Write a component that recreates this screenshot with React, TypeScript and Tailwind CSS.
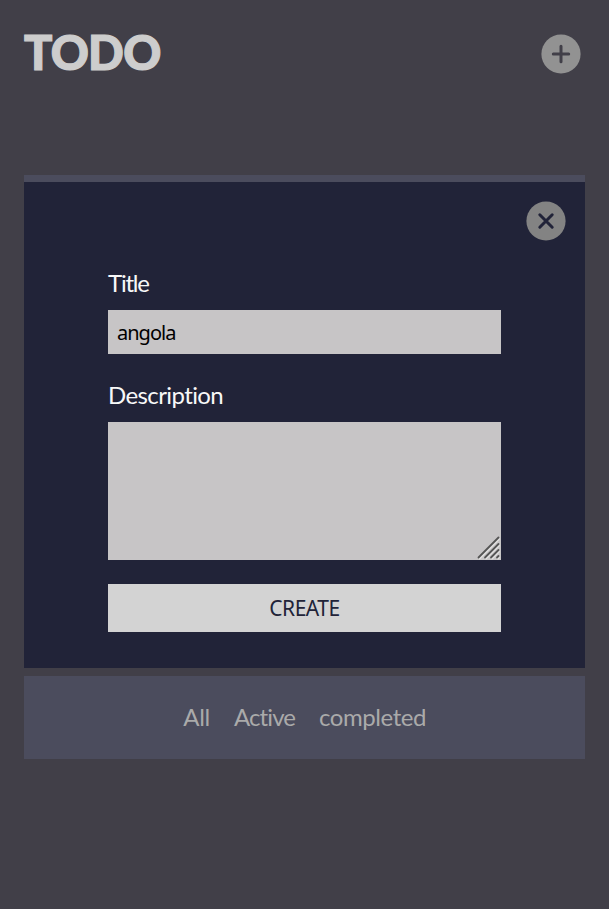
import { useState } from "react";

const filters = [
  { label: "All", width: "w-[27px]", text: "tracking-[-0.4px]" },
  { label: "Active", width: "w-[61px]", text: "tracking-[-0.9px]" },
  { label: "completed", width: "w-[107px]", text: "tracking-[-0.45px]" },
];

function Cross() {
  return (
    <svg viewBox="0 0 40 40" className="size-10" fill="none" strokeLinecap="round" strokeWidth="3">
      <circle cx="20" cy="20" r="19.6" fill="#838383" />
      <path d="M13.8 13.8 26.2 26.2M26.2 13.8 13.8 26.2" stroke="#212338" />
    </svg>
  );
}

function Plus() {
  return (
    <svg viewBox="0 0 40 40" className="size-10" fill="none" strokeLinecap="round" strokeWidth="3">
      <circle cx="20" cy="20" r="19.6" fill="#929292" />
      <path d="M20 12.3V27.7M12.3 20H27.7" stroke="#413f48" />
    </svg>
  );
}

function Grip() {
  return (
    <svg viewBox="0 0 24 24" className="pointer-events-none absolute bottom-0 right-0 size-6" fill="none" strokeWidth="1.8" strokeLinecap="round">
      <path d="M2.5 22.5 22 3M9 22.5 22 9.5M15 22.5 22 15.5M21 22.5 22 21.5" stroke="#e2e1e1" />
      <path d="M1.5 21.5 21.5 1.5M8 21.5 21.5 8M14 21.5 21.5 14M20 21.5 21.5 20" stroke="#555" />
    </svg>
  );
}

export default function App() {
  const [title, setTitle] = useState("angola");
  return (
    <main className="h-[909px] w-[609px] bg-[#413f48] px-6 font-['Lato',sans-serif]">
      <header className="flex h-[175px] items-start justify-between pr-1 pt-[34px]">
        <h1 className="mt-[-6px] whitespace-nowrap text-[47px] font-black leading-[48px] tracking-[-0.7px] text-[#cdcdcd] [-webkit-text-stroke:1.2px_#cdcdcd]">TODO</h1>
        <button aria-label="Add"><Plus /></button>
      </header>
      <section className="h-[493px] border-t-[7px] border-[#4b4c5d] bg-[#212338]">
        <div className="flex h-[83px] justify-end pr-[19px] pt-[19px]">
          <button aria-label="Close" className="h-10"><Cross /></button>
        </div>
        <form className="flex flex-col px-[84px]" onSubmit={(e) => e.preventDefault()}>
          <label htmlFor="title" className="h-[45px] pt-[3px] text-[24px] leading-[30px] tracking-[-1.2px] text-[#f8f8f8]">Title</label>
          <input id="title" value={title} onChange={(e) => setTitle(e.target.value)} className="h-11 bg-[#c7c5c6] px-[9px] font-['Noto_Sans',sans-serif] text-[20px] tracking-[-1px] text-black outline-none" />
          <label htmlFor="description" className="mt-6 h-11 pt-[2px] text-[24px] leading-[30px] tracking-[-0.6px] text-[#f8f8f8]">Description</label>
          <div className="relative h-[138px]">
            <textarea id="description" className="block h-full w-full resize-none bg-[#c7c5c6] p-2 font-['Noto_Sans',sans-serif] text-[20px] outline-none" />
            <Grip />
          </div>
          <button className="mt-6 h-12 bg-[#d3d3d3] pt-px font-['Noto_Sans',sans-serif] text-[21px] tracking-[-0.5px] text-[#212338]">CREATE</button>
        </form>
      </section>
      <footer className="mt-2 flex h-[83px] items-center justify-center gap-6 bg-[#4b4c5d] text-[24px] text-[#aaa]">
        {filters.map((f) => (
          <button key={f.label} className={`${f.width} ${f.text} -mt-0.5 whitespace-nowrap`}>{f.label}</button>
        ))}
      </footer>
    </main>
  );
}
